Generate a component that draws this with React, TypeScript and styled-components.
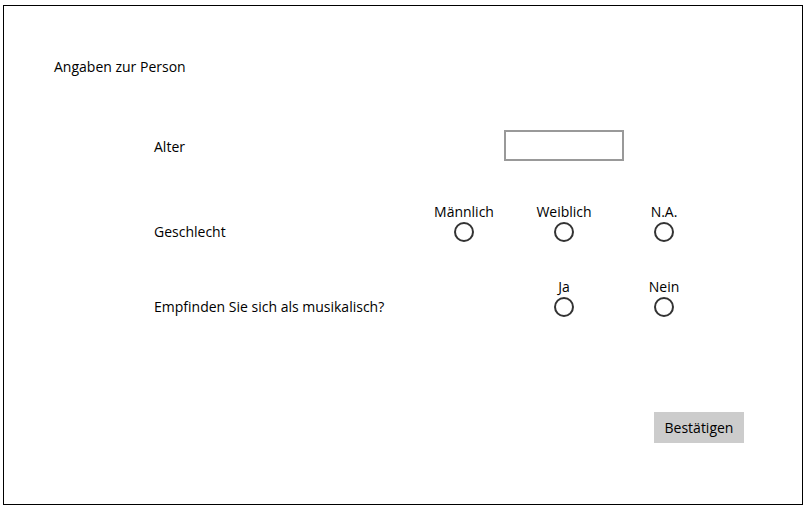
import React from "react";
import styled, { createGlobalStyle } from "styled-components";

const Global = createGlobalStyle`
  html, body { margin: 0; padding: 0; background: #fff; }
  body { font-family: "Open Sans", "Noto Sans", sans-serif; font-size: 14px; color: #000; }
`;

const Frame = styled.div`
  box-sizing: border-box;
  width: 800px;
  height: 500px;
  margin: 5px 0 0 3px;
  border: 1px solid #000;
  display: flex;
  flex-direction: column;
`;

const Title = styled.div`
  margin: 51px 0 0 50px;
  line-height: 20px;
  height: 20px;
`;

const Form = styled.div`
  display: grid;
  grid-template-columns: 260px 100px 100px 100px;
  margin-left: 150px;
`;

const Label = styled.div<{ $top: number; $row: number }>`
  grid-column: 1;
  grid-row: ${(p) => p.$row};
  margin-top: ${(p) => p.$top}px;
  align-self: end;
  line-height: 20px;
  height: 20px;
  display: flex;
  align-items: center;
`;

const AgeLabel = styled(Label)`
  align-self: center;
  padding-top: 2px;
`;

const TextBox = styled.input<{ $top: number }>`
  grid-column: 3;
  grid-row: 1;
  margin: ${(p) => p.$top}px -10px 0;
  box-sizing: border-box;
  height: 31px;
  border: 2px solid #999;
  background: #fff;
  outline: none;
  padding: 0 6px;
  font: inherit;
`;

const Option = styled.label<{ $col: number; $row: number; $top: number }>`
  grid-column: ${(p) => p.$col};
  grid-row: ${(p) => p.$row};
  margin-top: ${(p) => p.$top}px;
  display: flex;
  flex-direction: column;
  align-items: center;
  cursor: pointer;
`;

const OptionText = styled.span`
  line-height: 20px;
  height: 20px;
`;

const Radio = styled.span`
  box-sizing: border-box;
  width: 20px;
  height: 20px;
  border-radius: 50%;
  border: 2px solid #333;
  background: #fff;
`;

const Footer = styled.div`
  display: flex;
  justify-content: flex-end;
  padding-right: 58px;
  margin-top: auto;
  margin-bottom: 61px;
`;

const Button = styled.button`
  width: 90px;
  height: 31px;
  border: none;
  background: #ccc;
  color: #000;
  font: inherit;
  padding: 0;
  cursor: pointer;
`;

export default function App() {
  return (
    <>
      <Global />
      <Frame>
        <Title>Angaben zur Person</Title>
        <Form>
          <AgeLabel $row={1} $top={53}>Alter</AgeLabel>
          <TextBox $top={53} />

          <Label $row={2} $top={41}>Geschlecht</Label>
          <Option $col={2} $row={2} $top={41}>
            <OptionText>Männlich</OptionText>
            <Radio />
          </Option>
          <Option $col={3} $row={2} $top={41}>
            <OptionText>Weiblich</OptionText>
            <Radio />
          </Option>
          <Option $col={4} $row={2} $top={41}>
            <OptionText>N.A.</OptionText>
            <Radio />
          </Option>

          <Label $row={3} $top={35}>Empfinden Sie sich als musikalisch?</Label>
          <Option $col={3} $row={3} $top={35}>
            <OptionText>Ja</OptionText>
            <Radio />
          </Option>
          <Option $col={4} $row={3} $top={35}>
            <OptionText>Nein</OptionText>
            <Radio />
          </Option>
        </Form>
        <Footer>
          <Button>Bestätigen</Button>
        </Footer>
      </Frame>
    </>
  );
}
